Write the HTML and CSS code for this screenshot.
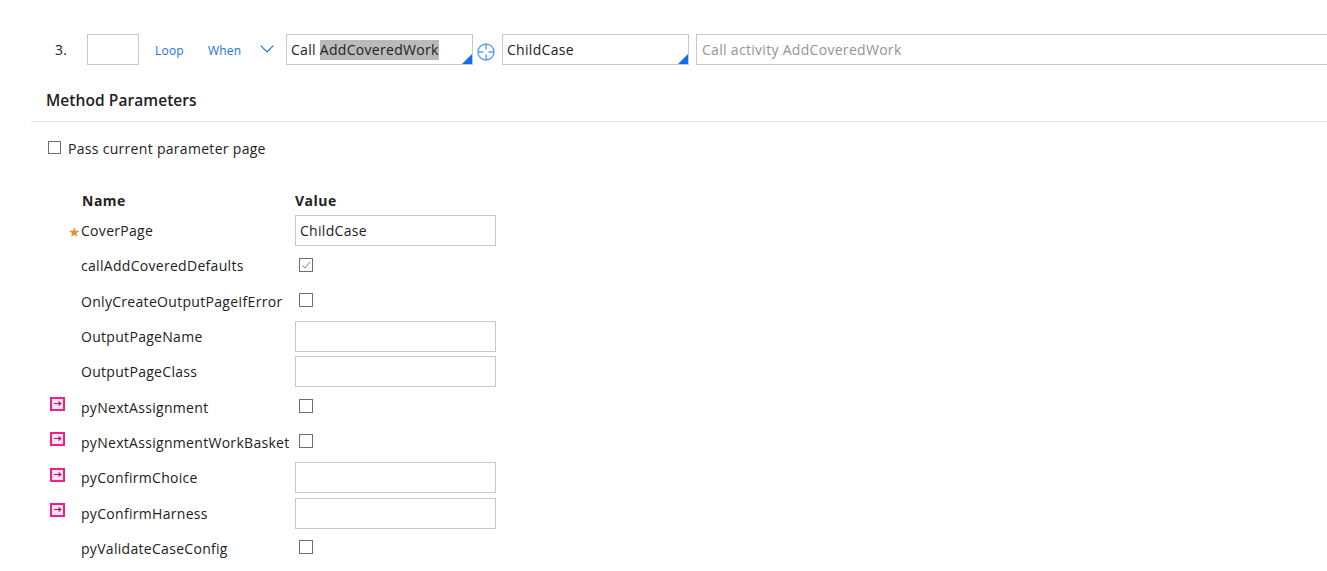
FILE: index.html
```html
<!DOCTYPE html>
<html lang="en">
<head>
<meta charset="utf-8">
<title>Method Parameters</title>
<link rel="stylesheet" href="styles.css">
</head>
<body>
<main class="page">
  <div class="step">
    <span class="step-num">3.</span>
    <div class="box box-label"></div>
    <a class="link link-loop">Loop</a>
    <a class="link link-when">When</a>
    <svg class="chevron" width="14" height="8" viewBox="0 0 14 8"><path d="M0.7 0.7 L7 7 L13.3 0.7" fill="none" stroke="#1a73e8" stroke-width="1.2"/></svg>
    <div class="box box-method autocomplete">Call&nbsp;<span class="selected">AddCoveredWork</span></div>
    <svg class="target" width="18" height="18" viewBox="0 0 18 18"><circle cx="9" cy="9" r="8" fill="none" stroke="#5aa0f5" stroke-width="1.4"/><path d="M9 1V6.5M9 11.5V17M1 9H6.5M11.5 9H17" stroke="#5aa0f5" stroke-width="1.4"/></svg>
    <div class="box box-page autocomplete">ChildCase</div>
    <div class="box box-desc">Call activity AddCoveredWork</div>
  </div>

  <h2 class="section-title">Method Parameters</h2>
  <div class="section-body">
    <label class="pass-row"><span class="check"></span><span class="pass-text">Pass current parameter page</span></label>

    <div class="params">
      <div class="param head"><span class="marker"></span><span class="name">Name</span><span class="value">Value</span></div>

      <div class="param"><span class="marker"><span class="star">★</span></span><span class="name">CoverPage</span><div class="box box-value">ChildCase</div></div>

      <div class="param"><span class="marker"></span><span class="name">callAddCoveredDefaults</span>
        <span class="check check-cell checked"><svg width="14" height="14" viewBox="0 0 14 14"><path d="M3.5 7.5 L6 10 L11 4" fill="none" stroke="#808080" stroke-width="1"/></svg></span></div>

      <div class="param"><span class="marker"></span><span class="name">OnlyCreateOutputPageIfError</span><span class="check check-cell"></span></div>

      <div class="param"><span class="marker"></span><span class="name">OutputPageName</span><div class="box box-value"></div></div>

      <div class="param"><span class="marker"></span><span class="name">OutputPageClass</span><div class="box box-value"></div></div>

      <div class="param"><span class="marker"><svg class="arrow" width="15" height="14" viewBox="0 0 15 14"><rect x="1" y="1" width="13" height="12" fill="#fde4f0" stroke="#ee1f8e" stroke-width="2"/><path d="M4 6.5H10.5M8.5 4.5L10.8 6.5L8.5 8.5" fill="none" stroke="#a8185f" stroke-width="1.1"/></svg></span><span class="name">pyNextAssignment</span><span class="check check-cell"></span></div>

      <div class="param"><span class="marker"><svg class="arrow" width="15" height="14" viewBox="0 0 15 14"><rect x="1" y="1" width="13" height="12" fill="#fde4f0" stroke="#ee1f8e" stroke-width="2"/><path d="M4 6.5H10.5M8.5 4.5L10.8 6.5L8.5 8.5" fill="none" stroke="#a8185f" stroke-width="1.1"/></svg></span><span class="name">pyNextAssignmentWorkBasket</span><span class="check check-cell"></span></div>

      <div class="param"><span class="marker"><svg class="arrow" width="15" height="14" viewBox="0 0 15 14"><rect x="1" y="1" width="13" height="12" fill="#fde4f0" stroke="#ee1f8e" stroke-width="2"/><path d="M4 6.5H10.5M8.5 4.5L10.8 6.5L8.5 8.5" fill="none" stroke="#a8185f" stroke-width="1.1"/></svg></span><span class="name">pyConfirmChoice</span><div class="box box-value"></div></div>

      <div class="param"><span class="marker"><svg class="arrow" width="15" height="14" viewBox="0 0 15 14"><rect x="1" y="1" width="13" height="12" fill="#fde4f0" stroke="#ee1f8e" stroke-width="2"/><path d="M4 6.5H10.5M8.5 4.5L10.8 6.5L8.5 8.5" fill="none" stroke="#a8185f" stroke-width="1.1"/></svg></span><span class="name">pyConfirmHarness</span><div class="box box-value"></div></div>

      <div class="param"><span class="marker"></span><span class="name">pyValidateCaseConfig</span><span class="check check-cell"></span></div>
    </div>
  </div>
</main>
</body>
</html>
```
FILE: styles.css
```css
* { box-sizing: border-box; }
html, body { margin: 0; height: 100%; overflow: hidden; background: #fff; }
body { font-family: "Open Sans", "Liberation Sans", sans-serif; font-size: 14px; letter-spacing: 0.3px; color: #222; }
.page { width: 1327px; padding-top: 34px; }

.box {
  display: flex;
  align-items: center;
  height: 31px;
  padding: 0 4px;
  border: 1px solid #c8c8c8;
  background: #fff;
  white-space: nowrap;
}

.step { display: flex; align-items: center; height: 31px; padding-left: 55px; }
.step-num { width: 32px; }
.box-label { width: 52px; margin-right: 16px; }
.link { color: #1a73e8; font-size: 12px; letter-spacing: 0.2px; position: relative; top: 1px; }
.link-loop { width: 53px; }
.link-when { width: 52px; }
.chevron { margin-right: 12px; position: relative; top: -1px; }
.box-method { width: 187px; margin-right: 4px; }
.target { margin-right: 7px; position: relative; top: 2px; }
.box-page { width: 187px; margin-right: 7px; }
.box-desc { flex: 1; padding-left: 5px; color: #949494; border-right: 0; }
.selected { background: #bababa; line-height: 20px; }
.autocomplete { position: relative; }
.autocomplete::after {
  content: "";
  position: absolute;
  right: 0;
  bottom: 0;
  border-style: solid;
  border-width: 0 0 10px 10px;
  border-color: transparent transparent #0f6ff0 transparent;
}

.section-title {
  margin: 0;
  padding: 25px 0 0 46px;
  height: 56px;
  font-size: 15.5px;
  line-height: 21px;
  letter-spacing: 0.07px;
  font-weight: 600;
  color: #222;
}
.section-body { margin-left: 31px; border-top: 1px solid #e4e4e4; padding-top: 19px; }

.check {
  display: inline-flex;
  flex: none;
  width: 13px;
  height: 13px;
  border: 1px solid #6e6e6e;
  background: #fff;
}
.check svg { display: block; margin: -1px; }

.pass-row { display: flex; align-items: center; gap: 7px; height: 13px; margin-left: 17px; white-space: nowrap; }
.pass-text { position: relative; top: 1px; }

.params { margin-top: 31.8px; }
.param {
  display: grid;
  grid-template-columns: 50px 214px 201px;
  align-items: center;
  height: 35.33px;
  white-space: nowrap;
}
.param.head { height: 27px; align-items: end; padding-bottom: 3px; font-weight: 700; letter-spacing: 0.5px; }
.param.head .name { position: relative; left: 1px; }
.marker { display: flex; align-items: center; padding-left: 19px; }
.star { color: #d9963f; font-size: 14px; margin-left: 18px; line-height: 1; position: relative; top: 2px; }
.arrow { display: block; position: relative; top: -3px; }
.box-value { width: 201px; }
.check-cell { margin: 0 0 2px 4px; width: 14px; height: 14px; }
```
